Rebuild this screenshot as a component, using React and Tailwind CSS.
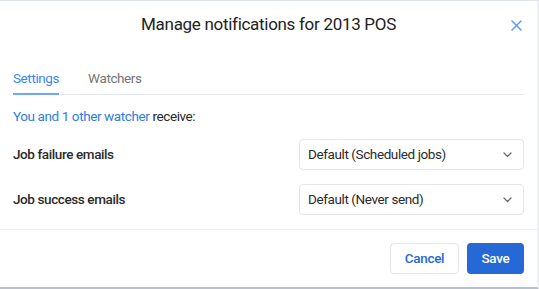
const Chevron = () => (
  <svg width="9" height="6" viewBox="0 0 9 6" fill="none" className="text-[#6b6b6b]">
    <path d="M1 1l3.5 3.5L8 1" stroke="currentColor" strokeWidth="1.3" strokeLinecap="round" strokeLinejoin="round" />
  </svg>
);

const Select = ({ value }) => (
  <div className="w-[225px] h-[31px] border border-[#e3e6ea] rounded-[4px] flex items-center justify-between pl-[8px] pr-[11px] text-[13.5px] tracking-[-0.4px] text-[#2b2b2b]">
    <span>{value}</span>
    <Chevron />
  </div>
);

export default function App() {
  return (
    <div
      className="w-[539px] h-[289px] bg-white flex flex-col border-t border-t-[#dfe3ea] border-r-2 border-r-[#eef0f3] border-b-2 border-b-[#b9c0cb] text-[#262626]"
      style={{ fontFamily: "Roboto, 'Liberation Sans', sans-serif" }}
    >
      <div className="relative h-[46px] flex items-center justify-center">
        <h1 className="text-[17px] tracking-[-0.3px] leading-[24px] text-[#222]">Manage notifications for 2013 POS</h1>
        <button className="absolute right-[15px] top-[19px] text-[#5b9bf0]">
          <svg width="11" height="11" viewBox="0 0 11 11" fill="none">
            <path d="M1 1l9 9M10 1l-9 9" stroke="currentColor" strokeWidth="1.5" strokeLinecap="round" />
          </svg>
        </button>
      </div>

      <div className="ml-[13px] mr-[13px] mt-[21px] flex border-b border-[#e4e7ee]">
        <div className="pb-[5px] leading-[20px] text-[13.5px] tracking-[-0.4px] text-[#3b87ee] border-b-2 border-[#6ea8f7] -mb-px">Settings</div>
        <div className="ml-[29px] pb-[5px] leading-[20px] text-[13.5px] tracking-[-0.4px] text-[#757575]">Watchers</div>
      </div>

      <div className="px-[13px] mt-[11px] leading-[20px] text-[13.5px] tracking-[-0.4px]">
        <span className="text-[#2f7de1]">You and 1 other watcher</span> receive:
      </div>

      <div className="pl-[13px] pr-[13px] mt-[13px] flex flex-col gap-[14px]">
        <div className="flex items-center justify-between">
          <span className="text-[13.5px] tracking-[-0.4px] font-medium text-[#2b2b2b]">Job failure emails</span>
          <Select value="Default (Scheduled jobs)" />
        </div>
        <div className="flex items-center justify-between">
          <span className="text-[13.5px] tracking-[-0.4px] font-medium text-[#2b2b2b]">Job success emails</span>
          <Select value="Default (Never send)" />
        </div>
      </div>

      <div className="mt-[14px] border-t border-[#eef0f3] flex justify-end gap-[8px] pr-[13px] pt-[13px]">
        <button className="w-[69px] h-[31px] border border-[#e3e6ea] rounded-[4px] text-[13.5px] tracking-[-0.3px] font-medium text-[#2469d6]">Cancel</button>
        <button className="w-[57px] h-[31px] rounded-[4px] bg-[#2469d6] text-[13.5px] tracking-[-0.3px] font-medium text-white">Save</button>
      </div>
    </div>
  );
}
